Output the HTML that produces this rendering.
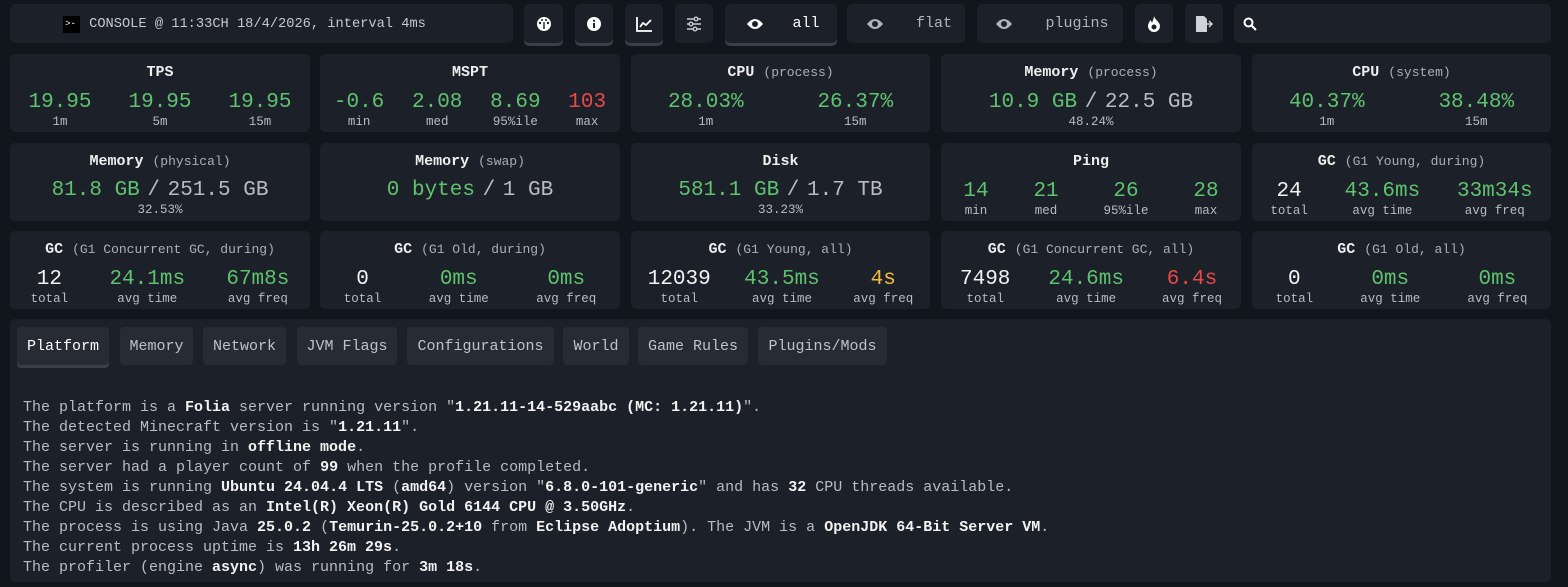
<!DOCTYPE html>
<html><head><meta charset="utf-8"><style>
*{box-sizing:border-box;margin:0;padding:0}
body{width:1568px;height:587px;background:#11151c;font-family:"Liberation Mono",monospace;color:#c9ccd1;overflow:hidden;position:relative}
.b{position:absolute;background:#1c2028;border-radius:5px}
.btn{top:4px;height:39px;display:flex;align-items:center;justify-content:center}
.act{box-shadow:0 3px 0 #3a3f48}
.card{height:78px;text-align:center}
.t{font-size:15px;font-weight:bold;color:#eee;margin-top:10px;height:18px}
.t span{font-weight:normal;font-size:13px;color:#aab0b8}
.row{display:flex;justify-content:space-around;padding:0;margin-top:9px}
.v{font-size:21px;line-height:24px}
.l{font-size:12.5px;color:#b8bcc2;line-height:14px}
.g{color:#5ec26f}.r{color:#e84848}.y{color:#f2bb3c}.w{color:#f2f2f2}.gr{color:#b9bcc2}
.sl{margin:0 -5px}
.tab{position:absolute;top:327px;height:38px;background:#262b34;border-radius:4px;font-size:15px;display:flex;align-items:center;justify-content:center;color:#bfc3c9}
.txt{position:absolute;left:23px;top:398px;font-size:15px;line-height:20px;color:#b9bcc2;white-space:pre}
.txt b{color:#f2f2f2}
svg{display:block}
</style></head><body>
<div class="b btn" style="left:10px;width:503px;font-size:13.7px;color:#c5c8cd;padding-right:34px;padding-top:2px"><span style="display:inline-block;width:17px;height:17px;background:#000;margin-right:9px;position:relative"><span style="position:absolute;left:2px;top:4px;color:#fff;font-size:9px;line-height:8px">&gt;-</span></span>CONSOLE @ 11:33CH 18/4/2026, interval 4ms</div>
<div class="b btn act" style="left:524px;width:39px"><svg width="16" height="16" viewBox="0 0 16 16"><circle cx="8" cy="8" r="7" fill="#fff"/><circle cx="4" cy="7" r="1.2" fill="#1c2028"/><circle cx="12" cy="7" r="1.2" fill="#1c2028"/><circle cx="6" cy="4" r="1" fill="#1c2028"/><circle cx="10" cy="4" r="1" fill="#1c2028"/><rect x="7.3" y="6" width="1.4" height="7" fill="#1c2028"/></svg></div>
<div class="b btn act" style="left:575px;width:38px"><svg width="16" height="16" viewBox="0 0 16 16"><circle cx="8" cy="8" r="7" fill="#fff"/><circle cx="8" cy="4.8" r="1.1" fill="#1c2028"/><rect x="7" y="7" width="2" height="5" fill="#1c2028"/></svg></div>
<div class="b btn act" style="left:625px;width:38px"><svg width="17" height="16" viewBox="0 0 17 16" fill="none" stroke="#fff" stroke-width="1.8"><path d="M1 1v14h15"/><path d="M4 11l3-4 3 2 5-5"/></svg></div>
<div class="b btn" style="left:675px;width:38px"><svg width="16" height="16" viewBox="0 0 16 16" fill="none" stroke="#c9ccd1" stroke-width="1.4"><path d="M1 3h14M1 8h14M1 13h14"/><circle cx="10" cy="3" r="1.8" fill="#1c2028"/><circle cx="5" cy="8" r="1.8" fill="#1c2028"/><circle cx="9" cy="13" r="1.8" fill="#1c2028"/></svg></div>
<div class="b btn act" style="left:725px;width:112px;font-size:15px;color:#fff;padding-left:4px"><svg width="18" height="14" viewBox="0 0 18 14" style="margin-right:28px"><path d="M1 7Q9-3 17 7Q9 17 1 7z" fill="#fff"/><circle cx="9" cy="7" r="3" fill="#1c2028"/></svg>all</div>
<div class="b btn" style="left:847px;width:118px;font-size:15px;color:#b0b4ba;padding-left:6px"><svg width="18" height="14" viewBox="0 0 18 14" style="margin-right:32px"><path d="M1 7Q9-3 17 7Q9 17 1 7z" fill="#b0b4ba"/><circle cx="9" cy="7" r="3" fill="#1c2028"/></svg>flat</div>
<div class="b btn" style="left:977px;width:146px;font-size:15px;color:#b0b4ba;padding-left:4px"><svg width="18" height="14" viewBox="0 0 18 14" style="margin-right:32px"><path d="M1 7Q9-3 17 7Q9 17 1 7z" fill="#b0b4ba"/><circle cx="9" cy="7" r="3" fill="#1c2028"/></svg>plugins</div>
<div class="b btn" style="left:1135px;width:38px"><svg width="14" height="16" viewBox="0 0 14 16"><path d="M7 0C8 4 13 6 13 10a6 6 0 0 1-12 0c0-3 2-4 2-6 1 1 2 2 2 3C6 4 7 2 7 0z" fill="#fff"/><circle cx="7" cy="11" r="2.5" fill="#1c2028"/></svg></div>
<div class="b btn" style="left:1185px;width:38px"><svg width="18" height="16" viewBox="0 0 18 16"><path d="M1 0h8l3 3v13H1z" fill="#d0d3d8"/><path d="M10 8h7M14 5l3 3-3 3" stroke="#d0d3d8" stroke-width="1.5" fill="none"/></svg></div>
<div class="b btn" style="left:1234px;width:317px;justify-content:flex-start;padding-left:9px"><svg width="14" height="14" viewBox="0 0 14 14" fill="none" stroke="#fff" stroke-width="2"><circle cx="5.5" cy="5.5" r="4"/><path d="M8.5 8.5L13 13"/></svg></div>

<div class="b card" style="left:10px;top:54px;width:300px"><div class="t">TPS</div><div class="row"><div><div class="v g">19.95</div><div class="l">1m</div></div><div><div class="v g">19.95</div><div class="l">5m</div></div><div><div class="v g">19.95</div><div class="l">15m</div></div></div></div>
<div class="b card" style="left:320px;top:54px;width:300px"><div class="t">MSPT</div><div class="row"><div><div class="v g">-0.6</div><div class="l">min</div></div><div><div class="v g">2.08</div><div class="l">med</div></div><div><div class="v g">8.69</div><div class="l">95%ile</div></div><div><div class="v r">103</div><div class="l">max</div></div></div></div>
<div class="b card" style="left:631px;top:54px;width:299px"><div class="t">CPU <span>(process)</span></div><div class="row"><div><div class="v g">28.03%</div><div class="l">1m</div></div><div><div class="v g">26.37%</div><div class="l">15m</div></div></div></div>
<div class="b card" style="left:941px;top:54px;width:300px"><div class="t">Memory <span>(process)</span></div><div class="row" style="justify-content:center"><div><div class="v"><span class="g">10.9 GB</span><span class="gr"> <span class="sl">/</span> 22.5 GB</span></div><div class="l">48.24%</div></div></div></div>
<div class="b card" style="left:1252px;top:54px;width:299px"><div class="t">CPU <span>(system)</span></div><div class="row"><div><div class="v g">40.37%</div><div class="l">1m</div></div><div><div class="v g">38.48%</div><div class="l">15m</div></div></div></div>

<div class="b card" style="left:10px;top:143px;width:300px"><div class="t">Memory <span>(physical)</span></div><div class="row" style="justify-content:center;margin-top:8px"><div><div class="v"><span class="g">81.8 GB</span><span class="gr"> <span class="sl">/</span> 251.5 GB</span></div><div class="l">32.53%</div></div></div></div>
<div class="b card" style="left:320px;top:143px;width:300px"><div class="t">Memory <span>(swap)</span></div><div class="row" style="justify-content:center;margin-top:8px"><div><div class="v"><span class="g">0 bytes</span><span class="gr"> <span class="sl">/</span> 1 GB</span></div></div></div></div>
<div class="b card" style="left:631px;top:143px;width:299px"><div class="t">Disk</div><div class="row" style="justify-content:center;margin-top:8px"><div><div class="v"><span class="g">581.1 GB</span><span class="gr"> <span class="sl">/</span> 1.7 TB</span></div><div class="l">33.23%</div></div></div></div>
<div class="b card" style="left:941px;top:143px;width:300px"><div class="t">Ping</div><div class="row"><div><div class="v g">14</div><div class="l">min</div></div><div><div class="v g">21</div><div class="l">med</div></div><div><div class="v g">26</div><div class="l">95%ile</div></div><div><div class="v g">28</div><div class="l">max</div></div></div></div>
<div class="b card" style="left:1252px;top:143px;width:299px"><div class="t">GC <span>(G1 Young, during)</span></div><div class="row"><div><div class="v w">24</div><div class="l">total</div></div><div><div class="v g">43.6ms</div><div class="l">avg time</div></div><div><div class="v g">33m34s</div><div class="l">avg freq</div></div></div></div>

<div class="b card" style="left:10px;top:231px;width:300px"><div class="t">GC <span>(G1 Concurrent GC, during)</span></div><div class="row"><div><div class="v w">12</div><div class="l">total</div></div><div><div class="v g">24.1ms</div><div class="l">avg time</div></div><div><div class="v g">67m8s</div><div class="l">avg freq</div></div></div></div>
<div class="b card" style="left:320px;top:231px;width:300px"><div class="t">GC <span>(G1 Old, during)</span></div><div class="row"><div><div class="v w">0</div><div class="l">total</div></div><div><div class="v g">0ms</div><div class="l">avg time</div></div><div><div class="v g">0ms</div><div class="l">avg freq</div></div></div></div>
<div class="b card" style="left:631px;top:231px;width:299px"><div class="t">GC <span>(G1 Young, all)</span></div><div class="row"><div><div class="v w">12039</div><div class="l">total</div></div><div><div class="v g">43.5ms</div><div class="l">avg time</div></div><div><div class="v y">4s</div><div class="l">avg freq</div></div></div></div>
<div class="b card" style="left:941px;top:231px;width:300px"><div class="t">GC <span>(G1 Concurrent GC, all)</span></div><div class="row"><div><div class="v w">7498</div><div class="l">total</div></div><div><div class="v g">24.6ms</div><div class="l">avg time</div></div><div><div class="v r">6.4s</div><div class="l">avg freq</div></div></div></div>
<div class="b card" style="left:1252px;top:231px;width:299px"><div class="t">GC <span>(G1 Old, all)</span></div><div class="row"><div><div class="v w">0</div><div class="l">total</div></div><div><div class="v g">0ms</div><div class="l">avg time</div></div><div><div class="v g">0ms</div><div class="l">avg freq</div></div></div></div>

<div class="b" style="left:10px;top:319px;width:1541px;height:263px"></div>
<div class="tab" style="left:17px;width:92px;color:#fff;box-shadow:0 3px 0 #3a3f48">Platform</div>
<div class="tab" style="left:120px;width:73px">Memory</div>
<div class="tab" style="left:203px;width:83px">Network</div>
<div class="tab" style="left:297px;width:100px">JVM Flags</div>
<div class="tab" style="left:407px;width:147px">Configurations</div>
<div class="tab" style="left:563px;width:66px">World</div>
<div class="tab" style="left:638px;width:110px">Game Rules</div>
<div class="tab" style="left:758px;width:129px">Plugins/Mods</div>
<div class="txt">The platform is a <b>Folia</b> server running version "<b>1.21.11-14-529aabc (MC: 1.21.11)</b>".
The detected Minecraft version is "<b>1.21.11</b>".
The server is running in <b>offline mode</b>.
The server had a player count of <b>99</b> when the profile completed.
The system is running <b>Ubuntu 24.04.4 LTS</b> (<b>amd64</b>) version "<b>6.8.0-101-generic</b>" and has <b>32</b> CPU threads available.
The CPU is described as an <b>Intel(R) Xeon(R) Gold 6144 CPU @ 3.50GHz</b>.
The process is using Java <b>25.0.2</b> (<b>Temurin-25.0.2+10</b> from <b>Eclipse Adoptium</b>). The JVM is a <b>OpenJDK 64-Bit Server VM</b>.
The current process uptime is <b>13h 26m 29s</b>.
The profiler (engine <b>async</b>) was running for <b>3m 18s</b>.</div>
</body></html>
